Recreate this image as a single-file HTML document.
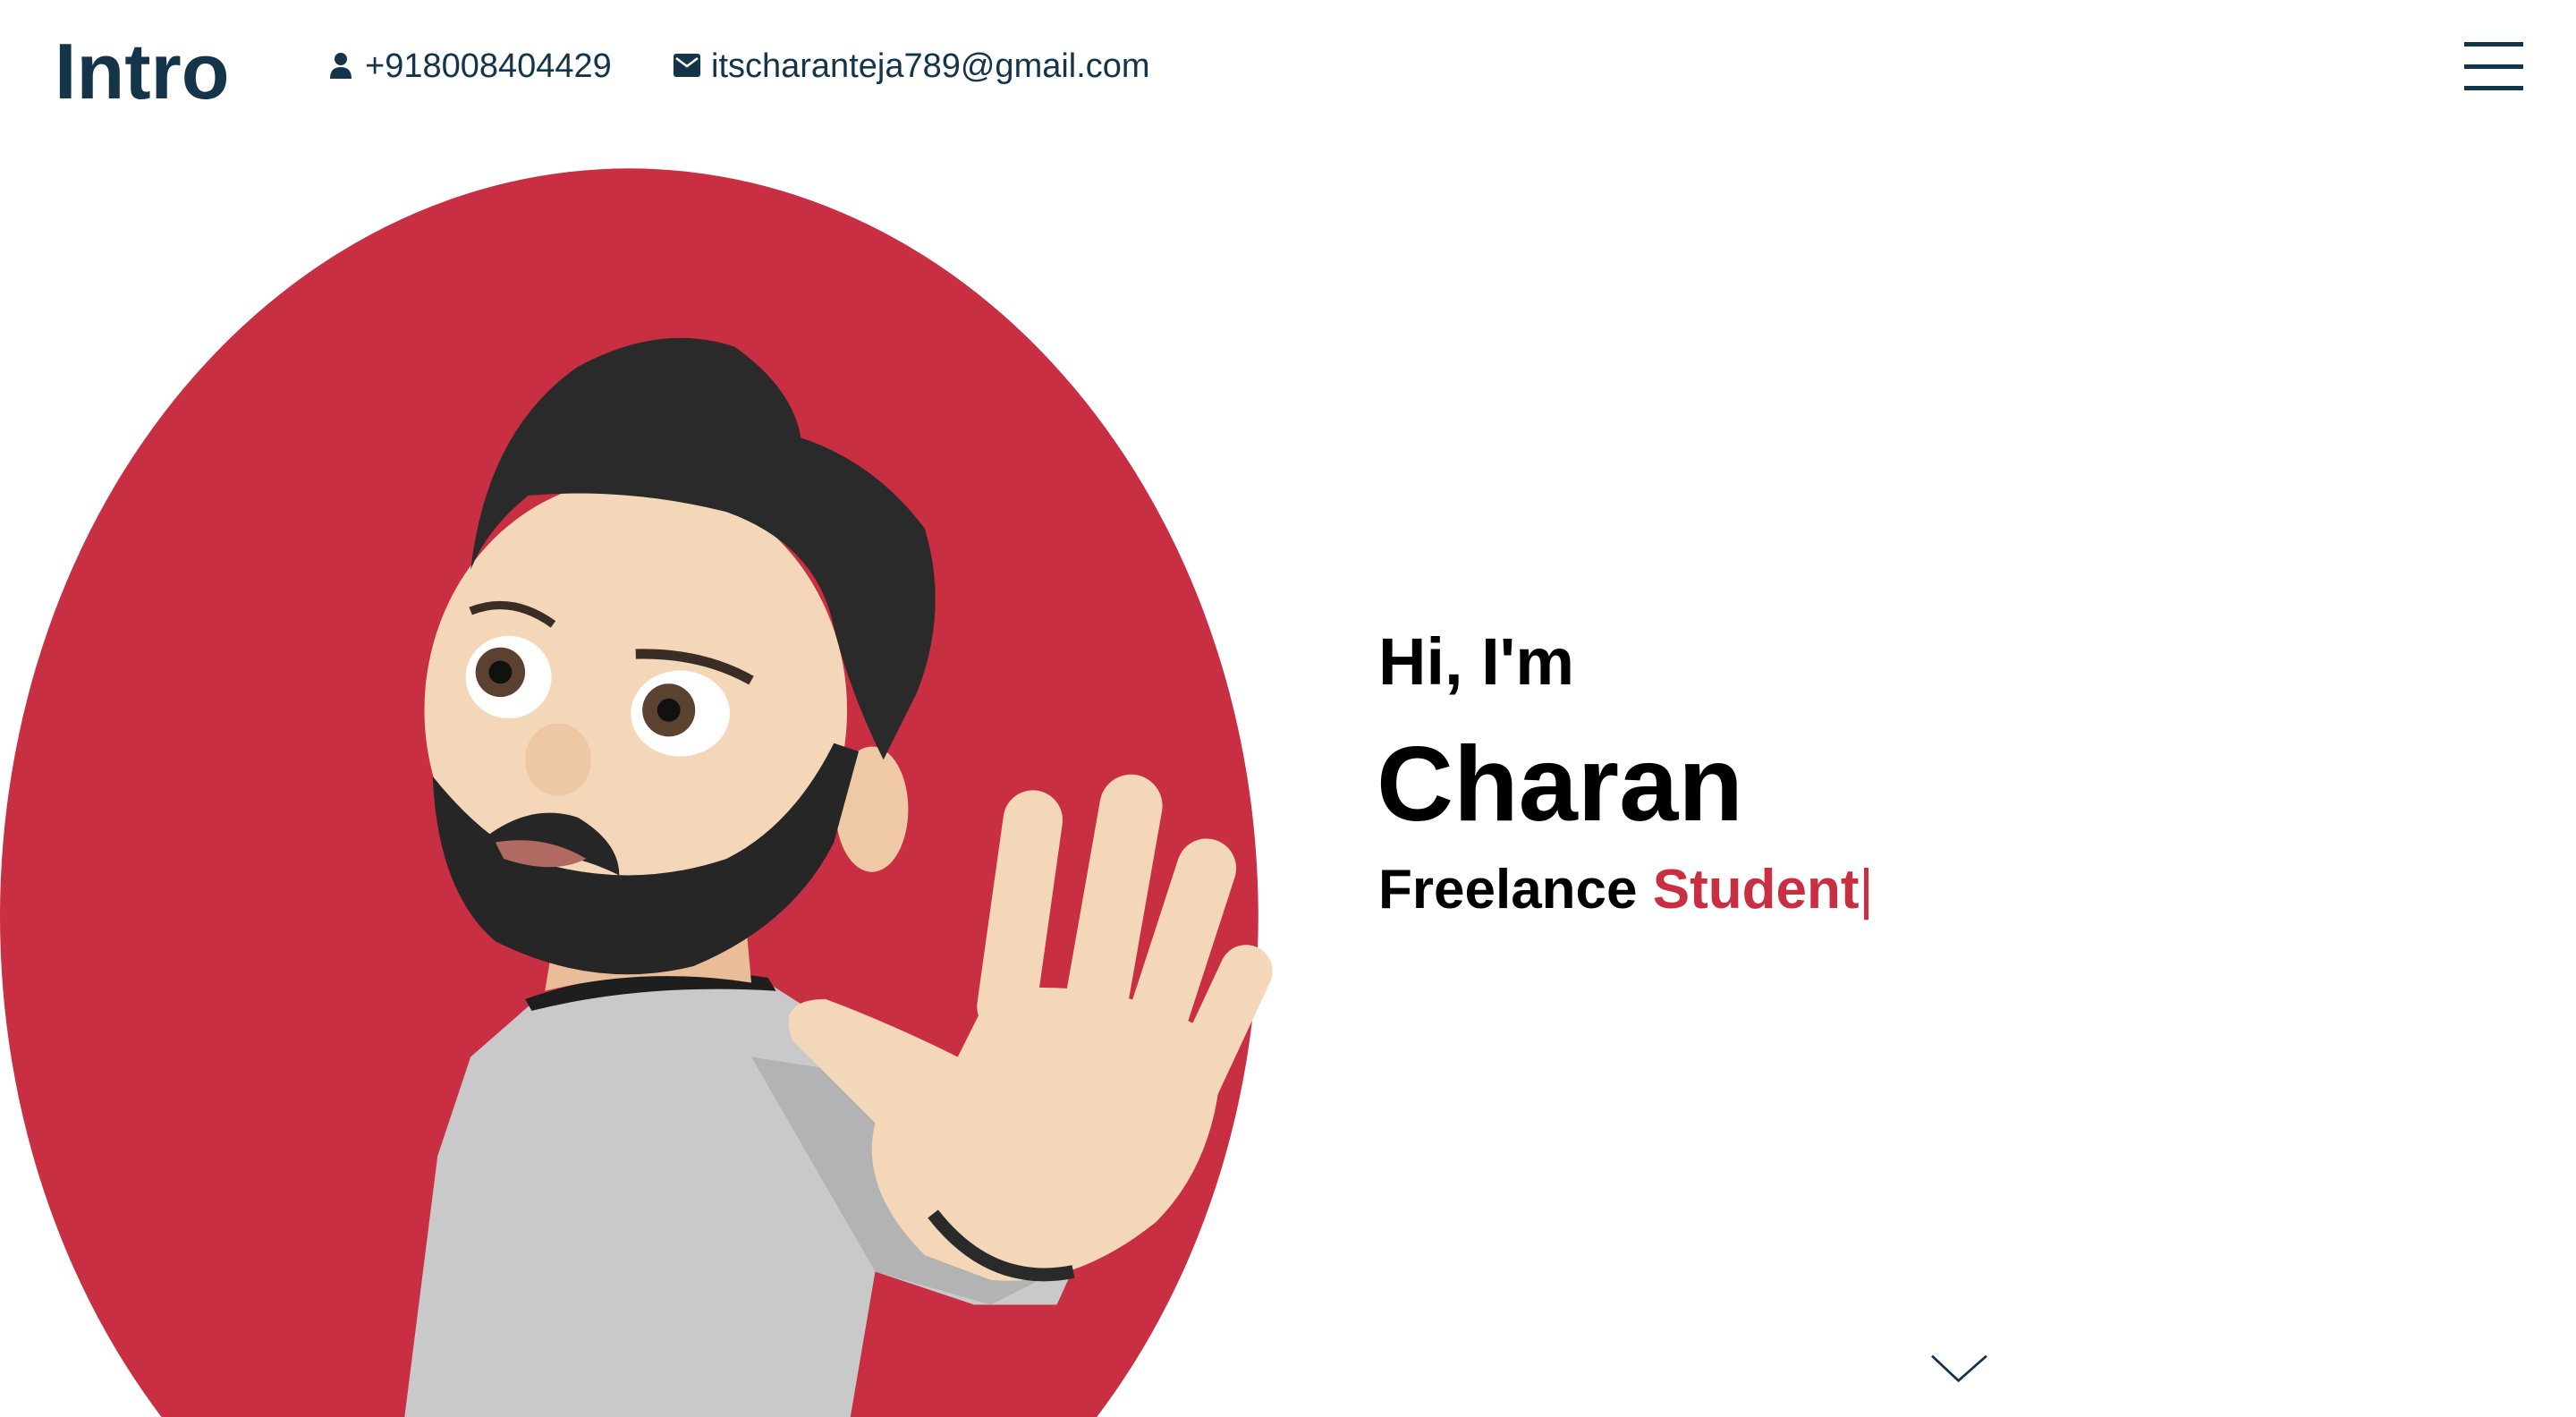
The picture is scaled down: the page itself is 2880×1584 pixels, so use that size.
<!DOCTYPE html>
<html><head><meta charset="utf-8"><style>
html,body{margin:0;padding:0;background:#fff;width:2880px;height:1584px;overflow:hidden;}
body{position:relative;font-family:"Liberation Sans",sans-serif;}
svg.bg{position:absolute;left:0;top:0;width:2880px;height:1584px;}
.t{position:absolute;white-space:nowrap;}
</style></head><body>
<svg class="bg" viewBox="0 0 1560 858" preserveAspectRatio="none">
  <ellipse cx="381" cy="555" rx="381" ry="453" fill="#c92f42"/>
  <path d="M245 858 L265 700 L285 640 L325 605 L460 592 L520 630 L565 700 L600 750 L650 768 L640 790 L590 790 L530 770 L515 858 Z" fill="#c9c9c9"/>
  <path d="M455 640 L520 650 L560 720 L600 755 L640 770 L600 790 L530 770 Z" fill="#b3b3b3"/>
  <path d="M318 605 Q390 580 465 592 L470 600 Q390 595 322 612 Z" fill="#1e1e1e"/>
  <path d="M340 540 L450 540 L455 595 Q390 585 330 600 Z" fill="#e8bd98"/>
  <ellipse cx="385" cy="430" rx="128" ry="140" fill="#f4d6b8"/>
  <ellipse cx="528" cy="490" rx="22" ry="38" fill="#efc9a5"/>
  <path d="M285 345 Q295 260 350 222 Q400 195 445 210 Q480 235 485 265 Q530 280 560 320 Q575 370 555 420 L535 460 Q515 420 505 380 Q495 330 440 310 Q380 295 320 300 Q295 320 285 345 Z" fill="#2a2a2a"/>
  <path d="M262 470 Q265 540 300 570 Q360 600 420 585 Q480 560 505 510 L520 455 L505 450 Q480 500 440 520 Q380 540 320 520 Q290 505 262 470 Z" fill="#262626"/>
  <path d="M290 510 Q320 485 350 495 Q375 510 375 530 Q345 515 320 518 Q300 522 290 510 Z" fill="#262626"/>
  <path d="M300 510 Q330 505 355 520 Q335 530 305 520 Z" fill="#b06a62"/>
  <ellipse cx="338" cy="460" rx="20" ry="22" fill="#eec7a4"/>
  <ellipse cx="308" cy="410" rx="26" ry="25" fill="#fff"/>
  <circle cx="303" cy="407" r="15" fill="#5b4230"/><circle cx="303" cy="407" r="7" fill="#111"/>
  <ellipse cx="412" cy="432" rx="30" ry="26" fill="#fff"/>
  <circle cx="405" cy="430" r="16" fill="#5b4230"/><circle cx="405" cy="430" r="7" fill="#111"/>
  <path d="M285 370 Q310 360 335 378" stroke="#3a2d25" stroke-width="5" fill="none"/>
  <path d="M385 396 Q425 395 455 412" stroke="#3a2d25" stroke-width="6" fill="none"/>
  <g fill="#f4d6b8">
    <rect x="600" y="478" width="36" height="150" rx="18" transform="rotate(8 618 550)"/>
    <rect x="655" y="468" width="38" height="160" rx="19" transform="rotate(10 674 550)"/>
    <rect x="695" y="505" width="36" height="150" rx="18" transform="rotate(18 713 580)"/>
    <rect x="720" y="568" width="32" height="120" rx="16" transform="rotate(25 736 628)"/>
    <path d="M560 760 Q520 720 530 680 Q500 650 480 630 Q470 605 500 605 Q540 620 580 640 L600 600 Q680 590 740 630 Q740 700 700 740 Q650 780 600 775 Z"/>
  </g>
  <path d="M565 735 Q600 780 650 770" stroke="#2a2a2a" stroke-width="8" fill="none"/>
  <path d="M1170 821 L1186 836 L1203 821" stroke="#14344a" stroke-width="1.5" fill="none"/>
</svg>

<div class="t" style="left:61px;top:30px;font-size:88px;font-weight:bold;color:#14344a;line-height:100px;">Intro</div>
<svg style="position:absolute;left:367px;top:58px" width="28" height="30" viewBox="0 0 28 30"><circle cx="14" cy="8" r="7" fill="#14344a"/><path d="M2 30 Q2 17 14 17 Q26 17 26 30 Z" fill="#14344a"/></svg>
<div class="t" style="left:408px;top:50px;font-size:38px;color:#14344a;line-height:48px;">+918008404429</div>
<svg style="position:absolute;left:753px;top:60px" width="30" height="26" viewBox="0 0 30 26"><rect width="30" height="26" rx="3" fill="#14344a"/><path d="M3 5 L15 14 L27 5" stroke="#fff" stroke-width="2.5" fill="none"/></svg>
<div class="t" style="left:795px;top:50px;font-size:38px;color:#14344a;line-height:48px;">itscharanteja789@gmail.com</div>
<div style="position:absolute;left:2755px;top:47px;width:66px;height:5px;background:#14344a"></div>
<div style="position:absolute;left:2755px;top:72px;width:66px;height:5px;background:#14344a"></div>
<div style="position:absolute;left:2755px;top:96px;width:66px;height:5px;background:#14344a"></div>

<div class="t" style="left:1541px;top:690px;font-size:74px;font-weight:bold;color:#000;line-height:100px;">Hi, I'm</div>
<div class="t" style="left:1539px;top:802px;font-size:119px;font-weight:bold;color:#000;line-height:150px;">Charan</div>
<div class="t" style="left:1541px;top:955px;font-size:62px;font-weight:bold;color:#000;line-height:80px;">Freelance <span style="color:#c92f42">Student</span><span style="color:#c92f42;font-weight:normal">|</span></div>
</body></html>
